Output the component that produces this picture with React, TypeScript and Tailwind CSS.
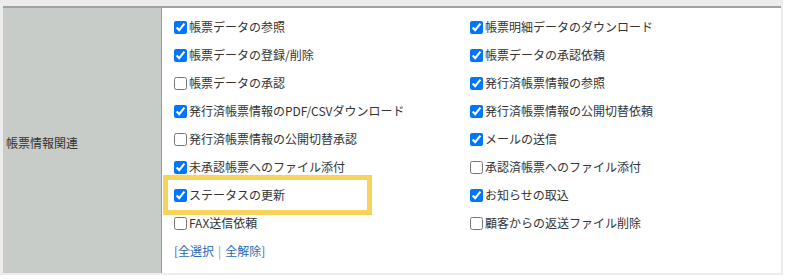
import React from "react";

const left = [
  { label: "帳票データの参照", on: true },
  { label: "帳票データの登録/削除", on: true },
  { label: "帳票データの承認", on: false },
  { label: "発行済帳票情報のPDF/CSVダウンロード", on: true },
  { label: "発行済帳票情報の公開切替承認", on: false },
  { label: "未承認帳票へのファイル添付", on: true },
  { label: "ステータスの更新", on: true },
  { label: "FAX送信依頼", on: false },
];

const right = [
  { label: "帳票明細データのダウンロード", on: true },
  { label: "帳票データの承認依頼", on: true },
  { label: "発行済帳票情報の参照", on: true },
  { label: "発行済帳票情報の公開切替依頼", on: true },
  { label: "メールの送信", on: true },
  { label: "承認済帳票へのファイル添付", on: false },
  { label: "お知らせの取込", on: true },
  { label: "顧客からの返送ファイル削除", on: false },
];

function Item({ label, on }: { label: string; on: boolean }) {
  return (
    <label className="flex h-[28px] items-center whitespace-nowrap">
      <input type="checkbox" defaultChecked={on} className="mr-[2px] h-[13px] w-[13px]" />
      <span>{label}</span>
    </label>
  );
}

export default function App() {
  const rows = left.map((l, i) => [l, right[i]]);
  return (
    <div
      className="relative h-[279px] w-[786px] bg-white text-[12px] text-[#333]"
      style={{ fontFamily: '"Noto Sans CJK JP", "Noto Sans", sans-serif' }}
    >
      <div className="w-[783px] bg-[#ececec] pb-[2px] pl-[3px] pr-[2px] pt-[6px]">
        <div className="flex border-t-2 border-[#a0a0a0]">
          <div className="flex w-[159px] items-center border-r border-[#999] bg-[#c8ccc8] pl-[3px] pt-[5px]">
            帳票情報関連
          </div>
          <div className="flex-1 bg-white pb-[8px] pl-[12px] pt-[5px]">
            <div className="grid grid-cols-[296px_1fr]">
              {rows.map(([a, b]) => (
                <React.Fragment key={a.label}>
                  <Item label={a.label} on={a.on} />
                  <Item label={b.label} on={b.on} />
                </React.Fragment>
              ))}
            </div>
            <div className="flex h-[28px] items-center text-[#1e6db8]">
              <span className="text-[#3a6a9a]">[</span>
              <a href="#">全選択</a>
              <span className="px-[4px] text-[#999]">|</span>
              <a href="#">全解除</a>
              <span className="text-[#3a6a9a]">]</span>
            </div>
          </div>
        </div>
      </div>
      <div className="absolute left-[163px] top-[175px] h-[40px] w-[209px] border-[5px] border-[#f6d45c]" />
    </div>
  );
}
